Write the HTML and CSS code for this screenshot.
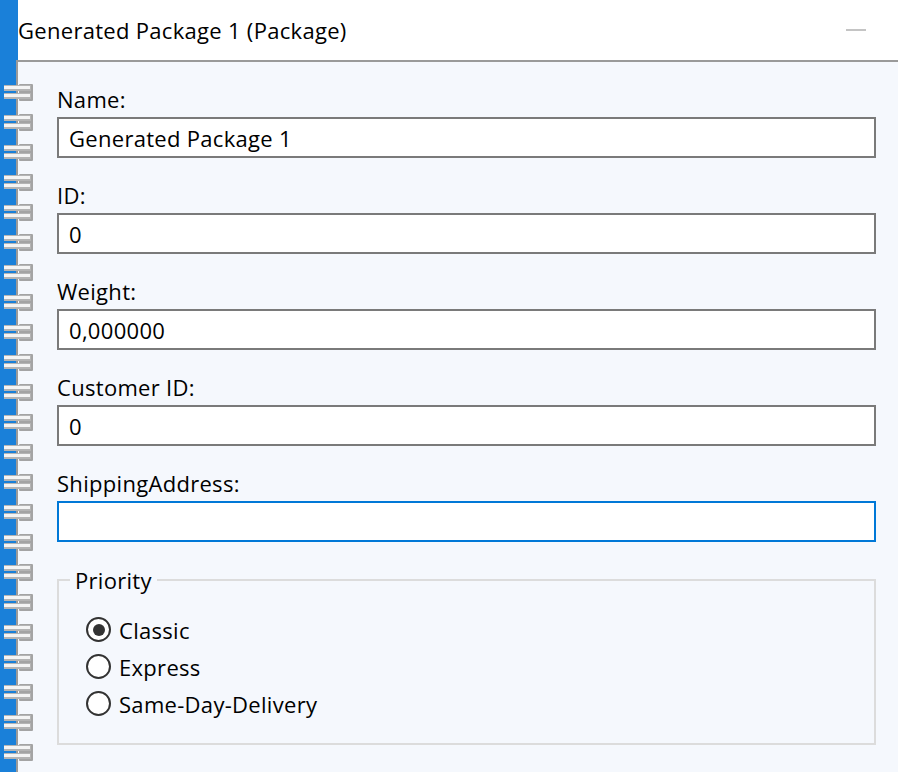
FILE: index.html
```html
<!DOCTYPE html>
<html lang="en">
<head>
    <meta charset="UTF-8">
    <meta name="viewport" content="width=device-width, initial-scale=1.0">
    <title>Generated Package 1 (Package)</title>
    <link rel="stylesheet" href="styles.css">
</head>
<body>
<div class="window">
    <div class="binding" id="binding"></div>

    <div class="main">
        <div class="header">
            <span class="title">Generated Package 1 (Package)</span>
            <span class="minimize"></span>
        </div>

        <div class="panel">
            <div class="field">
                <label for="name">Name:</label>
                <input type="text" id="name" value="Generated Package 1">
            </div>
            <div class="field">
                <label for="pkg-id">ID:</label>
                <input type="text" id="pkg-id" value="0">
            </div>
            <div class="field">
                <label for="weight">Weight:</label>
                <input type="text" id="weight" value="0,000000">
            </div>
            <div class="field">
                <label for="customer-id">Customer ID:</label>
                <input type="text" id="customer-id" value="0">
            </div>
            <div class="field">
                <label for="address">ShippingAddress:</label>
                <input type="text" id="address" class="focused" value="">
            </div>

            <fieldset class="group">
                <legend>Priority</legend>
                <label class="radio"><span class="dot checked"></span>Classic</label>
                <label class="radio"><span class="dot"></span>Express</label>
                <label class="radio"><span class="dot"></span>Same-Day-Delivery</label>
            </fieldset>
        </div>
    </div>
</div>

<script>
    // Spiral rings down the binding
    const binding = document.getElementById('binding');
    const ring = `
        <svg class="ring" width="34" height="17" viewBox="0 0 34 17">
            <rect x="19" y="0" width="14" height="17" rx="1" fill="#a4a4a4"/>
            <rect x="4" y="1" width="27" height="6" fill="#b4b4b4"/>
            <rect x="4" y="2" width="26" height="3" fill="#f4f4f4"/>
            <rect x="4" y="9" width="27" height="6" fill="#b4b4b4"/>
            <rect x="4" y="10" width="26" height="3" fill="#f4f4f4"/>
        </svg>`;
    for (let i = 0; i < 23; i++) {
        binding.insertAdjacentHTML('beforeend', ring);
    }
</script>
</body>
</html>
```

FILE: styles.css
```css
:root {
    --binding-color: #1a80d9;
    --panel-color: #f5f8fd;
    --border-color: #7a7a7a;
    --focus-color: #0078d7;
    --group-border: #dcdcdc;
    --font-family: 'Segoe UI', 'Open Sans', sans-serif;
}
html, body {
    margin: 0;
    height: 100%;
}
body {
    font-family: var(--font-family);
    font-size: 22px;
    letter-spacing: 0.3px;
    color: #000;
    background-color: var(--panel-color);
}
.window {
    display: flex;
    min-height: 100%;
}
.binding {
    width: 16px;
    flex-shrink: 0;
    background-color: var(--binding-color);
    padding-top: 84px;
    display: flex;
    flex-direction: column;
    gap: 13px;
}
.ring {
    display: block;
    position: relative;
    z-index: 1;
    flex-shrink: 0;
}
.main {
    flex: 1;
    display: flex;
    flex-direction: column;
}
.header {
    height: 60px;
    background-color: #fff;
    border-left: 2px solid var(--binding-color);
    display: flex;
    align-items: center;
    justify-content: space-between;
    padding-right: 32px;
}
.title {
    line-height: 28px;
}
.minimize {
    width: 20px;
    height: 2px;
    background-color: #c4c4c4;
}
.panel {
    flex: 1;
    border-top: 2px solid #9a9a9a;
    border-left: 2px solid #9a9a9a;
    padding: 22.5px 22px 20px 39px;
}
.field {
    margin-bottom: 22.5px;
}
.field label {
    display: block;
    line-height: 28px;
    margin-bottom: 4.5px;
}
.field input {
    display: block;
    width: 100%;
    height: 41px;
    box-sizing: border-box;
    border: 2px solid var(--border-color);
    background-color: #fff;
    padding: 0 10px;
    font-family: var(--font-family);
    font-size: 22px;
    letter-spacing: 0.3px;
    color: #000;
    outline: none;
}
.field input.focused {
    border-color: var(--focus-color);
}
.group {
    margin: 24px 0 0;
    border: 2px solid var(--group-border);
    padding: 17px 0 21px 11px;
}
.group legend {
    padding: 0 5px;
    line-height: 28px;
}
.radio {
    display: flex;
    align-items: center;
    gap: 8px;
    height: 37px;
    margin-left: 16px;
}
.dot {
    width: 25px;
    height: 25px;
    box-sizing: border-box;
    border: 2px solid #333;
    border-radius: 50%;
    background-color: #fff;
    display: flex;
    align-items: center;
    justify-content: center;
}
.dot.checked::after {
    content: '';
    width: 12px;
    height: 12px;
    border-radius: 50%;
    background-color: #333;
}
```
